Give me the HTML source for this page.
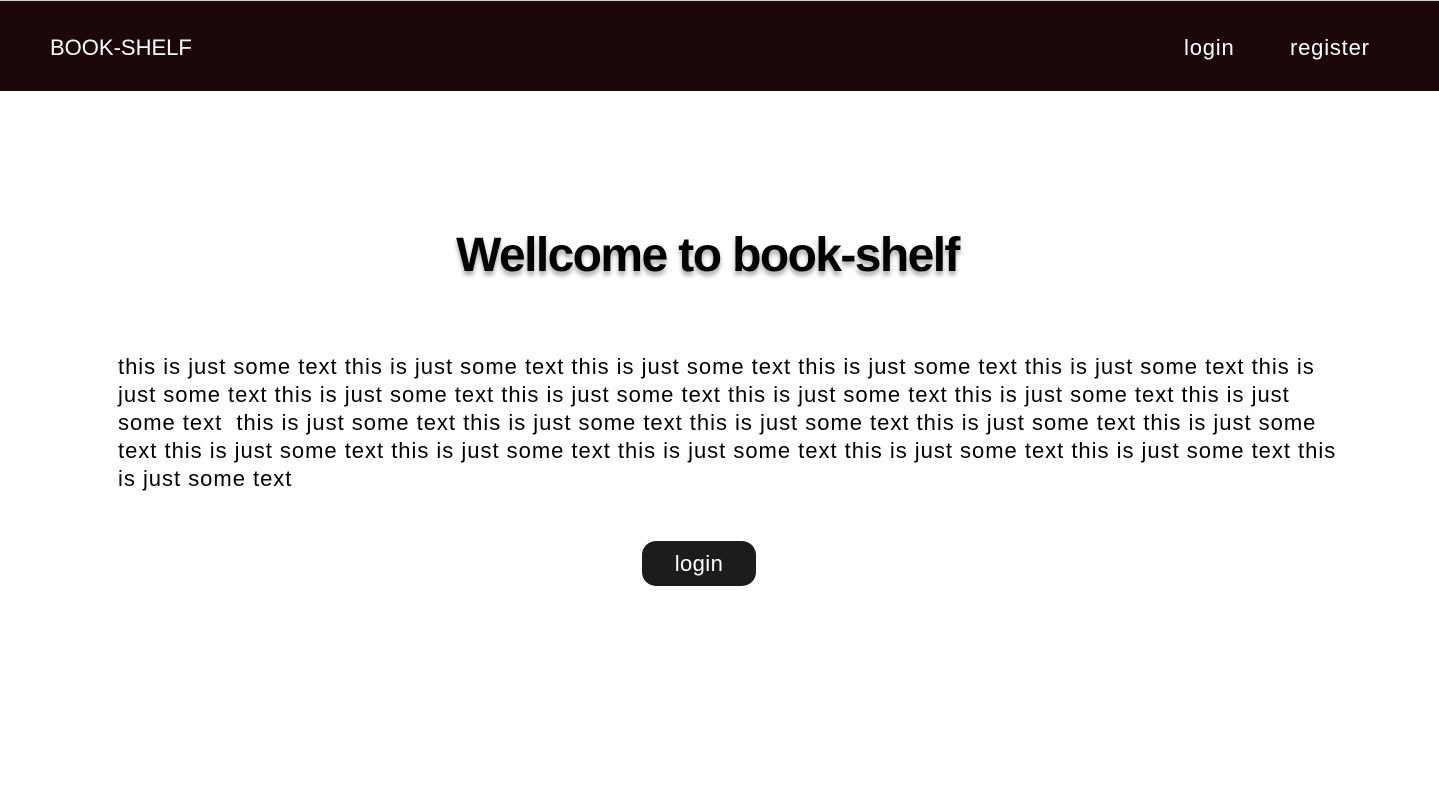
<!DOCTYPE html>
<html><head><style>
body{margin:0;background:#fff;font-family:"Liberation Sans",sans-serif;width:1439px;height:790px;overflow:hidden;position:relative}
.nav{position:absolute;top:1px;left:0;width:1439px;height:90px;background:#1c0808}
.top{position:absolute;top:0;left:0;width:1439px;height:1px;background:#d0d0d0}
.nav span{position:absolute;color:#fff;font-size:22px;top:34px}
h1{position:absolute;margin:0;left:0;width:1415px;text-align:center;top:228px;font-size:48px;font-weight:bold;letter-spacing:-1.6px;text-shadow:0 4px 5px rgba(0,0,0,.35)}
.p{position:absolute;left:118px;top:353px;font-size:22px;line-height:28px;letter-spacing:0.98px}
.p div{white-space:nowrap}
.btn{position:absolute;left:642px;top:541px;width:114px;height:45px;background:#1c1c1c;border-radius:14px;color:#fff;font-size:22px;text-align:center;line-height:45px;letter-spacing:0.4px}
</style></head><body>
<div class="top"></div>
<div class="nav">
<span style="left:50px">BOOK-SHELF</span>
<span style="left:1184px;letter-spacing:0.8px">login</span>
<span style="left:1290px;letter-spacing:0.8px">register</span>
</div>
<h1>Wellcome to book-shelf</h1>
<div class="p">
<div>this is just some text this is just some text this is just some text this is just some text this is just some text this is</div>
<div>just some text this is just some text this is just some text this is just some text this is just some text this is just</div>
<div>some text &nbsp;this is just some text this is just some text this is just some text this is just some text this is just some</div>
<div>text this is just some text this is just some text this is just some text this is just some text this is just some text this</div>
<div>is just some text</div>
</div>
<div class="btn">login</div>
</body></html>
